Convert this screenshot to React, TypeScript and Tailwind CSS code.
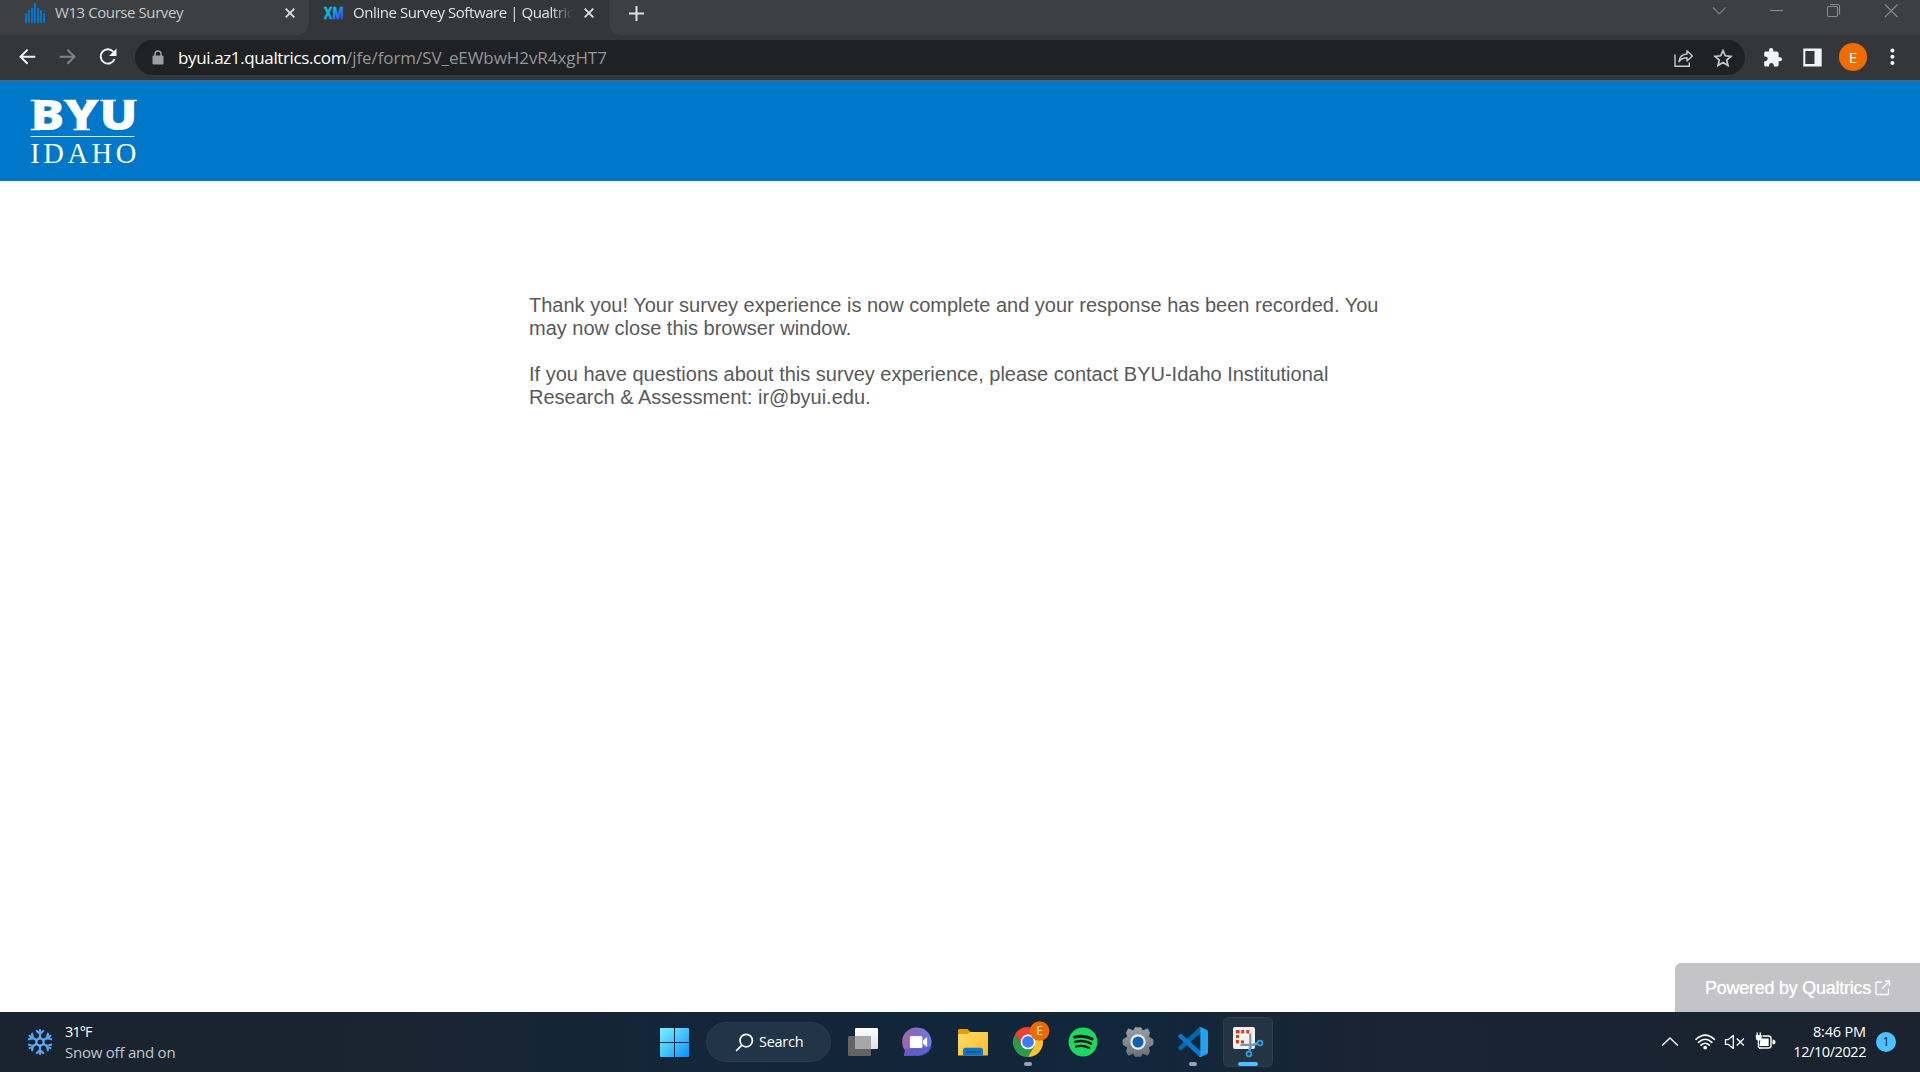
import React, { type ReactNode } from "react";

function TabClose() {
  return (
    <svg width="10" height="10" viewBox="0 0 10 10" className="shrink-0">
      <path d="M0.7 0.7 L9.3 9.3 M9.3 0.7 L0.7 9.3" stroke="#dadce0" strokeWidth="1.9" />
    </svg>
  );
}

function CanvasBars() {
  const bars = [
    [0, 10], [3, 7], [6, 5], [9, 0], [12, 5], [15, 7], [18, 10],
  ];
  return (
    <svg width="20" height="20" viewBox="0 0 20 20" className="shrink-0">
      {bars.map(([x, y]) => (
        <rect key={x} x={x} y={y} width="2" height={20 - y} fill="#0076c8" />
      ))}
    </svg>
  );
}

function TabStrip() {
  return (
    <div className="flex h-[35px] bg-[#35363a]">
      <div className="flex h-[35px] w-[309px] items-start rounded-br-[12px] bg-[#3c4043] pl-[25px]">
        <div className="flex h-[26px] w-full items-center">
          <CanvasBars />
          <span className="ml-[10px] w-[230px] pb-[2px] text-[15px] leading-[24px] tracking-[-0.42px] text-[#c5c8cb]">
            W13 Course Survey
          </span>
          <TabClose />
        </div>
      </div>
      <div className="flex h-[35px] w-[300px] items-start pl-[15px]">
        <div className="flex h-[26px] w-full items-center">
          <svg width="20" height="12" viewBox="0 0 20 12" className="shrink-0 overflow-visible">
            <defs>
              <linearGradient id="xm" x1="0" y1="0" x2="1" y2="1">
                <stop offset="0" stopColor="#21dbaa" />
                <stop offset="0.45" stopColor="#00b4ef" />
                <stop offset="1" stopColor="#5a1ff5" />
              </linearGradient>
            </defs>
            <text x="0" y="11.6" fontSize="16" fontWeight="700" textLength="20" lengthAdjust="spacingAndGlyphs" fill="url(#xm)" fontFamily="Open Sans" stroke="url(#xm)" strokeWidth="0.5">XM</text>
          </svg>
          <span className="ml-[9px] mr-[11px] w-[220px] overflow-hidden whitespace-nowrap pb-[2px] text-[15px] leading-[24px] tracking-[-0.42px] text-[#dfe1e4] [mask-image:linear-gradient(to_right,black_198px,transparent_220px)]">
            Online Survey Software | Qualtrics
          </span>
          <TabClose />
        </div>
      </div>
      <div className="flex h-[35px] grow items-start justify-between rounded-bl-[12px] bg-[#3c4043] pl-[20px] pr-[22px]">
        <svg width="15" height="26" viewBox="0 0 15 26">
          <path d="M7.5 6 V21 M0 13.5 H15" stroke="#dfe1e4" strokeWidth="2" />
        </svg>
        <svg width="186" height="26" viewBox="0 0 186 26" fill="none" stroke="#888b8e" strokeWidth="1.1">
          <path d="M1 7.3 L7.3 13.8 L13.6 7.3" />
          <path d="M58 10.5 H71" />
          <rect x="115.5" y="6.5" width="10" height="10" rx="1.5" />
          <path d="M118 4.5 H125.5 Q127.5 4.5 127.5 6.5 V14.5" />
          <path d="M173 4.5 L185.5 17 M185.5 4.5 L173 17" />
        </svg>
      </div>
    </div>
  );
}

function Toolbar() {
  return (
    <div className="flex h-[46px] items-center border-b border-[#606266] bg-[#35363a]">
      <svg width="135" height="45" viewBox="0 0 135 45" fill="none" className="shrink-0">
        <path d="M35.3 21.7 H21 M27.6 14.6 L20.5 21.7 L27.6 28.8" stroke="#f1f3f4" strokeWidth="2" />
        <path d="M59.7 21.7 H74 M67.4 14.6 L74.5 21.7 L67.4 28.8" stroke="#808286" strokeWidth="2" />
        <path d="M113.6 17 A7.2 7.2 0 1 0 114.6 24" stroke="#f1f3f4" strokeWidth="2" />
        <path d="M116.5 13.5 V21 H109 Z" fill="#f1f3f4" />
      </svg>
      <div className="flex h-[35px] grow items-center rounded-full bg-[#202124] pl-[17px] pr-[12px]">
        <svg width="12" height="16" viewBox="0 0 12 16">
          <rect x="0.5" y="5.5" width="11" height="9" rx="1" fill="#9aa0a6" />
          <path d="M3 6 V4 A3 3 0 0 1 9 4 V6" fill="none" stroke="#9aa0a6" strokeWidth="1.5" />
        </svg>
        <span className="ml-[14px] w-[168px] whitespace-nowrap text-[17px] tracking-[-0.38px] text-white">byui.az1.qualtrics.com</span>
        <span className="whitespace-nowrap text-[17px] tracking-[-0.07px] text-[#93969a]">/jfe/form/SV_eEWbwH2vR4xgHT7</span>
        <svg width="60" height="20" viewBox="0 0 60 20" fill="none" stroke="#c8cacc" className="ml-auto">
          <path d="M2 6.5 V18.3 H16.3 V14.5" strokeWidth="1.4" />
          <path d="M6 13.8 C6.4 9 9 6.2 14 6 V2.8 L19.4 8 L14 13 V9.8 C10 9.8 7.8 11 6 13.8 Z" strokeWidth="1.4" strokeLinejoin="round" />
          <path d="M50 2.6 L52.3 7.8 L57.9 8.3 L53.7 12 L55 17.4 L50 14.5 L45 17.4 L46.3 12 L42.1 8.3 L47.7 7.8 Z" strokeWidth="1.7" />
        </svg>
      </div>
      <svg width="59" height="24" viewBox="0 0 59 24" className="ml-[18px] shrink-0">
        <path d="M17 11.2 H15.6 V7.4 C15.6 6.3 14.8 5.5 13.8 5.5 H10.2 V4.1 A2.1 2.1 0 0 0 6 4.1 V5.5 H2.6 C1.8 5.5 1.2 6.2 1.2 7.2 V10.4 H2.3 A2.4 2.4 0 0 1 2.3 15.2 H1.2 V18.9 C1.2 19.7 1.8 20.4 2.6 20.4 H6.1 V19 A2.4 2.4 0 0 1 10.8 19 V20.4 H13.8 C14.8 20.4 15.6 19.7 15.6 18.9 V15.2 H17 A2 2 0 0 0 17 11.2 Z" fill="#f1f3f4" />
        <path d="M40.3 2.5 H58.7 V20.5 H40.3 Z M42.3 5 V18 H51.5 V5 Z" fill="#f1f3f4" fillRule="evenodd" />
      </svg>
      <div className="-mt-[1px] ml-[17px] flex h-[28px] w-[28px] shrink-0 items-center justify-center rounded-full bg-[#ee6c00] text-[15px] leading-none text-white">E</div>
      <svg width="6" height="18" viewBox="0 0 6 18" fill="#f1f3f4" className="-mt-[1px] ml-[22px] mr-[25px] shrink-0">
        <circle cx="3.4" cy="2.6" r="2" />
        <circle cx="3.4" cy="8.8" r="2" />
        <circle cx="3.4" cy="15" r="2" />
      </svg>
    </div>
  );
}

function Banner() {
  return (
    <header className="flex h-[100px] items-start bg-[#0077c8] pl-[30px] pt-[17px]">
      <svg width="108" height="70" viewBox="0 0 108 70" fill="#ffffff" className="overflow-visible">
        <g fontFamily="Open Sans" fontWeight="800" fontSize="42.5">
          <text x="0.5" y="32.2" textLength="34" lengthAdjust="spacingAndGlyphs">B</text>
          <text x="34.5" y="32.2" textLength="34" lengthAdjust="spacingAndGlyphs">Y</text>
          <text x="69.5" y="32.2" textLength="38" lengthAdjust="spacingAndGlyphs">U</text>
        </g>
        <path d="M0.7 1.8 H10 V3.2 H0.7 Z M0.7 30.8 H10 V32.2 H0.7 Z M33.5 1.8 H46 V3.2 H33.5 Z M56 1.8 H69 V3.2 H56 Z M43.5 30.8 H60 V32.2 H43.5 Z M70.5 1.8 H86 V3.2 H70.5 Z M93.5 1.8 H107 V3.2 H93.5 Z" />
        <rect x="0.5" y="38" width="104" height="1" opacity="0.85" />
        <text x="0.3" y="64.5" fontFamily="Liberation Serif" fontSize="28.5" textLength="106" lengthAdjust="spacing">IDAHO</text>
      </svg>
    </header>
  );
}

function Survey() {
  return (
    <main className="flex grow flex-col justify-between bg-white">
      <div className="ml-[529px] mt-[113px] w-[862px] font-['Liberation_Sans',Arial,sans-serif] text-[20px] leading-[23px] text-[#58595b]">
        <p>
          Thank you! Your survey experience is now complete and your response has been recorded. You
          <br />
          may now close this browser window.
        </p>
        <p className="mt-[23px]">
          If you have questions about this survey experience, please contact BYU-Idaho Institutional
          <br />
          Research &amp; Assessment: ir@byui.edu.
        </p>
      </div>
      <a className="flex h-[49px] w-[245px] items-center self-end rounded-tl-[6px] bg-[#c4c4c6] pl-[30px] pt-[2px] font-['Liberation_Sans',Arial,sans-serif] text-[18px] tracking-[-0.26px] text-white [text-shadow:0_0_1px_rgba(255,255,255,0.7)]">
        Powered by Qualtrics
        <svg width="16" height="16" viewBox="0 0 16 16" fill="none" stroke="#ffffff" strokeWidth="1.3" className="mb-[2px] ml-[4px]">
          <path d="M7 2 H1.8 Q1 2 1 2.8 V13.7 Q1 14.5 1.8 14.5 H12.7 Q13.5 14.5 13.5 13.7 V8.8" />
          <path d="M7 8.8 L14.5 1.2 M9.8 1 H14.6 V5.8" />
        </svg>
      </a>
    </main>
  );
}

function Cell({ children }: { children: ReactNode }) {
  return (
    <svg width="55" height="60" viewBox="0 0 55 60" className="shrink-0">
      {children}
    </svg>
  );
}

function Snowflake() {
  return (
    <svg width="28" height="28" viewBox="-14 -14 28 28" fill="none" stroke="url(#snow)" strokeWidth="2.2" strokeLinecap="round" className="shrink-0">
      <defs>
        <linearGradient id="snow" gradientUnits="userSpaceOnUse" x1="-12" y1="10" x2="12" y2="-10">
          <stop offset="0" stopColor="#8cc4ff" />
          <stop offset="1" stopColor="#3d98f0" />
        </linearGradient>
      </defs>
      <circle r="3.6" />
      {[0, 60, 120, 180, 240, 300].map((a) => (
        <path key={a} d="M0.01 -4 L0 -12 M-3.2 -11 L0 -8 L3.2 -11" transform={`rotate(${a})`} />
      ))}
    </svg>
  );
}

function Apps() {
  return (
    <div className="flex">
      <Cell>
        <defs>
          <linearGradient id="pane" x1="0" y1="0" x2="0" y2="1">
            <stop offset="0" stopColor="#ffffff" />
            <stop offset="1" stopColor="#dedede" />
          </linearGradient>
        </defs>
        <rect x="12" y="24" width="23" height="20" rx="1" fill="#636363" />
        <rect x="19" y="16" width="23" height="21" rx="1" fill="url(#pane)" />
        <rect x="19" y="24" width="16" height="13" fill="#a7a7a7" />
      </Cell>
      <Cell>
        <linearGradient id="chat" x1="0" y1="0.3" x2="1" y2="0.6">
          <stop offset="0" stopColor="#a9649c" />
          <stop offset="0.45" stopColor="#7b6fce" />
          <stop offset="1" stopColor="#6780e2" />
        </linearGradient>
        <g transform="translate(0.6 0)">
          <path d="M27.3 15.8 A14 14 0 1 1 24 43.6 L12.6 44 C12.2 43.6 13 40.6 13.4 38.4 A14.2 14.2 0 0 1 27.3 15.8 Z" fill="url(#chat)" />
          <path d="M40.5 34 A14 14 0 0 1 24 43.6 L12.6 44 C12.2 43 13.8 38 13.6 37 Z" fill="#5553c4" opacity="0.65" />
          <rect x="18.3" y="24" width="12.5" height="12" rx="1.5" fill="#ffffff" />
          <path d="M31.5 28.5 L35.5 25 V35 L31.5 31.5 Z" fill="#ffffff" />
        </g>
      </Cell>
      <Cell>
        <linearGradient id="folder" x1="0" y1="0" x2="1" y2="1">
          <stop offset="0" stopColor="#ffdc68" />
          <stop offset="1" stopColor="#f9b92b" />
        </linearGradient>
        <path d="M12 18.3 Q12 17 13.5 17 H21.5 L24.5 20 H41 Q42 20 42 21 V30 H12 Z" fill="#e0a003" />
        <path d="M12 23.5 Q12 22 13.5 22 H21.5 L24.5 20 H41 Q42 20 42 21 V43.5 H12 Z" fill="url(#folder)" />
        <path d="M17 43.5 V38.5 Q17 35.8 19.7 35.8 H34.3 Q37 35.8 37 38.5 V43.5 Z" fill="#0d75cb" />
        <path d="M21 39.8 H33" stroke="#094b8e" strokeWidth="1.3" strokeLinecap="round" />
      </Cell>
      <Cell>
        <path d="M20.6 33.5 L14 22.4 A15 15 0 0 1 40 22.5 H27 Z" fill="#ea4335" />
        <path d="M20.6 33.5 L14 22.4 A15 15 0 0 0 27 45 L33.5 33.7 Z" fill="#2c9b48" />
        <path d="M33.5 33.7 L27 45 A15 15 0 0 0 40 22.5 H27 Z" fill="#fcc031" />
        <circle cx="27" cy="29.9" r="7.4" fill="#ffffff" />
        <circle cx="27" cy="29.9" r="5.9" fill="#3b7ded" />
        <circle cx="38.6" cy="19" r="9.8" fill="#ec6a05" />
        <text x="38.6" y="23.3" textAnchor="middle" fontSize="12" fontFamily="Open Sans" fill="#ffe3cc">E</text>
        <rect x="23" y="50" width="8" height="4" rx="2" fill="#9aa3ad" />
      </Cell>
      <Cell>
        <circle cx="27" cy="30" r="14.4" fill="#1ed760" />
        <g fill="none" stroke="#0c1c14" strokeLinecap="round">
          <path d="M18.6 25.2 Q27.8 22.6 36.2 26.9" strokeWidth="2.9" />
          <path d="M19.2 30 Q27.5 27.6 35 31.6" strokeWidth="2.5" />
          <path d="M20 34.6 Q27 32.6 33.2 36" strokeWidth="2.1" />
        </g>
      </Cell>
      <Cell>
        <linearGradient id="gear" x1="0" y1="0" x2="0" y2="1">
          <stop offset="0" stopColor="#98a0a5" />
          <stop offset="1" stopColor="#6b7378" />
        </linearGradient>
        <path d="M17.5 16.8 L22.4 18.9 L24 15.8 H30 L31.6 18.9 L36.5 16.8 L38.6 20.5 L37.5 24.7 L42 27.7 V32.5 L37.5 35.4 L38.6 39.7 L36.5 43.3 L31.6 41.3 L30 44.3 H24 L22.4 41.3 L17.5 43.3 L15.4 39.7 L16.5 35.4 L12 32.5 V27.7 L16.5 24.7 L15.4 20.5 Z" fill="url(#gear)" stroke="url(#gear)" strokeWidth="0.8" strokeLinejoin="round" />
        <circle cx="27" cy="30" r="7.7" fill="#e9edf0" />
        <circle cx="27" cy="30" r="5.5" fill="#0d62b4" />
      </Cell>
      <Cell>
        <path d="M34 15 L35.5 20 L15.5 38 Q14.7 38.6 14 38 L12.3 36.5 Q11.5 35.7 12.3 35 L32.8 15.7 Q33.4 15.1 34 15 Z" fill="#0069ad" />
        <path d="M34 45 L35.5 40 L15.5 22 Q14.7 21.4 14 22 L12.3 23.5 Q11.5 24.3 12.3 25 L32.8 44.3 Q33.4 44.9 34 45 Z" fill="#087bc8" />
        <path d="M34.4 45 C33.9 45 33.3 44.8 32.9 44.4 Q34.3 45 34.3 42.8 V17.2 Q34.3 15 32.9 15.6 C33.5 15 34.3 14.9 35 15.2 L41 18 Q42 18.6 42 19.7 V40.3 Q42 41.4 41 42 L35.4 44.8 Q34.9 45 34.4 45 Z" fill="#22a3f1" />
        <rect x="23" y="50" width="8" height="4" rx="2" fill="#9aa3ad" />
      </Cell>
      <Cell>
        <rect x="2.5" y="5.5" width="49" height="49" rx="5" fill="#243444" stroke="#303f4e" />
        <rect x="12" y="15" width="22" height="22" rx="2" fill="#eff1f2" />
        <g fill="#d13f12">
          <rect x="15" y="18" width="3.6" height="3.4" /><rect x="20.2" y="18" width="3" height="3.4" /><rect x="25.3" y="18" width="3" height="3.4" />
          <rect x="15" y="23" width="3" height="3" /><rect x="15" y="28" width="3" height="3.4" /><rect x="20" y="28.4" width="3" height="3" />
        </g>
        <path d="M19.5 32.8 H33 M29.3 21.5 V35" stroke="#8b9198" strokeWidth="2.2" fill="none" />
        <path d="M32 32.5 L36.3 31.5 M29.2 34 L28.3 38.5" stroke="#9aa0a6" strokeWidth="2.4" fill="none" />
        <circle cx="39" cy="31" r="2.4" fill="none" stroke="#2b9fe0" strokeWidth="1.8" />
        <circle cx="28" cy="42" r="2.4" fill="none" stroke="#2b9fe0" strokeWidth="1.8" />
        <path d="M32.5 33.2 L36.8 32.2 M30 34.5 L29 39.6" stroke="#2b9fe0" strokeWidth="1.4" fill="none" />
        <rect x="17" y="50" width="20" height="4" rx="2" fill="#4cc2ff" />
      </Cell>
    </div>
  );
}

function Tray() {
  return (
    <svg width="116" height="24" viewBox="0 0 116 24" fill="none" stroke="#ffffff" className="shrink-0">
      <path d="M1.2 15.5 L9 8 L16.8 15.5" strokeWidth="1.3" />
      <g strokeWidth="1.6" strokeLinecap="round">
        <path d="M35 9.3 Q44.2 0.8 53.4 9.3" />
        <path d="M37.5 12.3 Q44.2 6.2 50.9 12.3" />
        <path d="M40 15.2 Q44.2 11.3 48.4 15.2" />
      </g>
      <circle cx="44.2" cy="17.6" r="1.9" fill="#ffffff" stroke="none" />
      <path d="M64.5 9.6 H67.4 L72.3 5.4 V18.4 L67.4 14.4 H64.5 Z" strokeWidth="1.3" strokeLinejoin="round" />
      <path d="M75.8 8.5 L82.8 15.5 M82.8 8.5 L75.8 15.5" strokeWidth="1.3" />
      <path d="M101.5 6 H107.5 Q110 6 110 8.5 V15.5 Q110 18 107.5 18 H98" strokeWidth="1.4" />
      <path d="M99.5 8.5 H107.7 V16 H98.5 Z" fill="#ffffff" stroke="none" />
      <path d="M111.5 9.5 Q114.5 9.5 114.5 12 Q114.5 14.5 111.5 14.5 Z" fill="#ffffff" stroke="none" />
      <path d="M96.2 2.6 V6 M99.3 2.6 V6" strokeWidth="1.3" />
      <path d="M94.8 5 H100.7 V8 Q100.7 10.2 98.6 10.5 H97 Q94.8 10.2 94.8 8 Z" fill="#ffffff" stroke="none" />
      <path d="M97.4 10 V16 Q97.4 18 99.5 18" strokeWidth="1.3" />
    </svg>
  );
}

function Taskbar() {
  return (
    <footer className="flex h-[60px] items-start bg-[linear-gradient(to_right,#1a2430_0%,#1a2532_22%,#13263a_35%,#12273b_60%,#1a2433_72%,#1a232f_100%)] text-white">
      <div className="flex w-[646px] items-start pl-[26px]">
        <div className="mt-[16px]">
          <Snowflake />
        </div>
        <div className="ml-[11px] mt-[10px] leading-[20px]">
          <p className="text-[14.5px] tracking-[-0.9px]">31°F</p>
          <p className="text-[15px] tracking-[-0.23px] text-[#c2c6ca]">Snow off and on</p>
        </div>
      </div>
      <svg width="55" height="60" viewBox="0 0 55 60" className="shrink-0">
        <defs>
          <linearGradient id="win" gradientUnits="userSpaceOnUse" x1="14" y1="16" x2="43" y2="45">
            <stop offset="0" stopColor="#7df1ff" />
            <stop offset="0.5" stopColor="#46c4fb" />
            <stop offset="1" stopColor="#0793fb" />
          </linearGradient>
        </defs>
        <path d="M14 17 Q14 16 15 16 H28 V30 H14 Z M29 16 H42 Q43 16 43 17 V30 H29 Z M14 31 H28 V45 H15 Q14 45 14 44 Z M29 31 H43 V44 Q43 45 42 45 H29 Z" fill="url(#win)" />
      </svg>
      <div className="ml-[5px] mt-[10px] flex h-[40px] w-[125px] shrink-0 items-center rounded-full border border-[#293b4c] bg-[#223447] pl-[28px]">
        <svg width="19" height="19" viewBox="0 0 19 19" fill="none" stroke="#ffffff" strokeWidth="1.7">
          <circle cx="11.2" cy="7.6" r="6.2" />
          <path d="M6.8 12.2 L1.2 17.8" />
        </svg>
        <span className="ml-[5px] text-[14.5px] tracking-[-0.27px]">Search</span>
      </div>
      <div className="ml-[5px]">
        <Apps />
      </div>
      <div className="ml-auto flex h-[60px] items-start pr-[24px]">
        <div className="mt-[18px]">
          <Tray />
        </div>
        <div className="mt-[10px] flex w-[89px] flex-col items-end text-[14.5px] leading-[20px]">
          <p className="tracking-[-0.17px]">8:46 PM</p>
          <p className="tracking-[-0.43px]">12/10/2022</p>
        </div>
        <div className="ml-[10px] mt-[20px] flex h-[20px] w-[20px] items-center justify-center rounded-full bg-[#4cc2ff] text-[12.5px] leading-none text-[#101820]">1</div>
      </div>
    </footer>
  );
}

export default function App() {
  return (
    <div className="flex h-[1072px] w-[1920px] flex-col overflow-hidden bg-white font-['Open_Sans','Noto_Sans',sans-serif]">
      <TabStrip />
      <Toolbar />
      <Banner />
      <Survey />
      <Taskbar />
    </div>
  );
}
